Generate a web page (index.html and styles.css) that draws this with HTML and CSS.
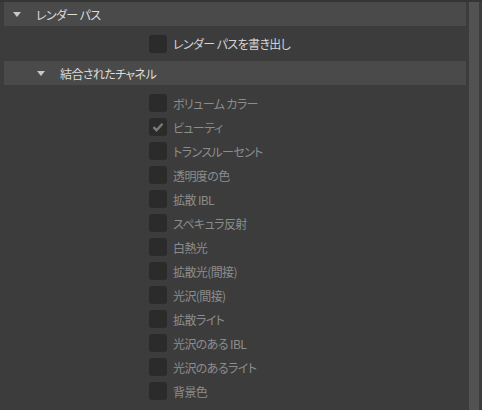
FILE: index.html
```html
<!DOCTYPE html>
<html lang="ja">
<head>
  <meta charset="UTF-8">
  <title>レンダー パス</title>
  <link rel="stylesheet" href="styles.css">
</head>
<body>
  <div class="panel">
    <div class="content">
      <!-- Render passes -->
      <div class="section-head">
        <span class="arrow"></span>
        <span>レンダー パス</span>
      </div>
      <label class="export-row">
        <span class="box"></span>
        <span class="export-label">レンダー パスを書き出し</span>
      </label>

      <!-- Combined channels -->
      <div class="section-head sub">
        <span class="arrow"></span>
        <span>結合されたチャネル</span>
      </div>
      <ul class="channels">
        <li><span class="box"></span>ボリューム カラー</li>
        <li><span class="box checked"><svg viewBox="0 0 18 18" width="18" height="18"><path d="M4.5 9.2l3 3 6-6.4" fill="none" stroke="#7b7b7b" stroke-width="2.4"/></svg></span>ビューティ</li>
        <li><span class="box"></span>トランスルーセント</li>
        <li><span class="box"></span>透明度の色</li>
        <li><span class="box"></span>拡散 IBL</li>
        <li><span class="box"></span>スペキュラ反射</li>
        <li><span class="box"></span>白熱光</li>
        <li><span class="box"></span>拡散光(間接)</li>
        <li><span class="box"></span>光沢(間接)</li>
        <li><span class="box"></span>拡散ライト</li>
        <li><span class="box"></span>光沢のある IBL</li>
        <li><span class="box"></span>光沢のあるライト</li>
        <li><span class="box"></span>背景色</li>
      </ul>
    </div>
    <div class="scrollbar"></div>
  </div>
</body>
</html>
```

FILE: styles.css
```css
/* Panel */
body {
  margin: 0;
  background-color: #3c3c3c;
  font-family: "Noto Sans CJK JP", "Noto Sans", sans-serif;
  font-size: 12px;
  font-feature-settings: "palt";
  letter-spacing: -0.6px;
  overflow: hidden;
}

.panel {
  display: flex;
  height: 408px;
  border-top: 2px solid #353535;
}

.content {
  flex: 1;
  padding-left: 4px;
  margin-right: 3px;
}

.scrollbar {
  width: 10px;
  background-color: #525252;
  margin-right: 3px;
}

/* Collapsible headers */
.section-head {
  display: flex;
  align-items: center;
  height: 24px;
  background-color: #4a4a4a;
  color: #dcdcdc;
}

.section-head .arrow {
  width: 0;
  height: 0;
  border-left: 4px solid transparent;
  border-right: 4px solid transparent;
  border-top: 5px solid #c8c8c8;
  margin-left: 9px;
  margin-right: 15px;
}

.section-head.sub .arrow {
  margin-left: 33px;
}

/* Checkboxes */
.box {
  display: inline-flex;
  width: 18px;
  height: 18px;
  border-radius: 3px;
  background-color: #2b2b2b;
  flex-shrink: 0;
}

.export-row {
  display: flex;
  align-items: center;
  gap: 6px;
  height: 35px;
  padding-left: 145px;
  color: #d4d4d4;
}

.channels {
  list-style: none;
  margin: 0;
  padding: 6px 0 0 145px;
}

.channels li {
  display: flex;
  align-items: center;
  gap: 6px;
  height: 24px;
  color: #8c8c8c;
}
```
